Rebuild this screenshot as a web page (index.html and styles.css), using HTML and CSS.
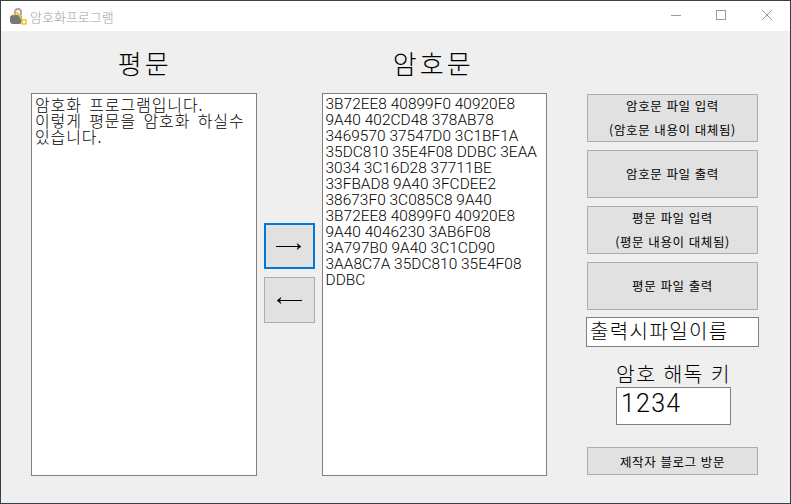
FILE: index.html
```html
<!DOCTYPE html>
<html lang="ko">
<head>
<meta charset="utf-8">
<title>암호화프로그램</title>
<link rel="stylesheet" href="styles.css">
</head>
<body>
<div class="window">
  <header class="titlebar">
    <svg class="app-icon" width="18" height="18" viewBox="0 0 18 18">
      <path d="M6 8V5a3 3 0 0 1 6 0v3" fill="none" stroke="#a8a8a8" stroke-width="2"/>
      <rect x="1" y="8" width="12" height="9" rx="3" fill="#777"/>
      <path d="M8 5l6 9" stroke="#f2c230" stroke-width="1.500" fill="none"/>
      <path d="M4 8l5-2" stroke="#f2c230" stroke-width="1.500" fill="none"/>
      <rect x="13" y="13" width="4" height="4" fill="none" stroke="#f2c230" stroke-width="1.500"/>
    </svg>
    <span class="app-title">암호화프로그램</span>
    <div class="controls">
      <svg class="ctl" width="46" height="30" viewBox="0 0 46 30"><path d="M19 14.500h10" stroke="#999" fill="none"/></svg>
      <svg class="ctl" width="46" height="30" viewBox="0 0 46 30"><rect x="18.500" y="9.500" width="9" height="9" stroke="#999" fill="none"/></svg>
      <svg class="ctl" width="46" height="30" viewBox="0 0 46 30"><path d="M18 9l10 10M28 9l-10 10" stroke="#999" fill="none"/></svg>
    </div>
  </header>
  <main class="client">
    <section class="col text-col">
      <h1 class="heading heading-plain">평문</h1>
      <div class="box hangul">암호화 프로그램입니다.<br>이렇게 평문을 암호화 하실수<br>있습니다.</div>
    </section>
    <div class="arrows">
      <button class="btn arrow focused" aria-label="암호화">
        <svg width="26" height="9" viewBox="0 0 26 9"><path d="M0 4.500h24" fill="none" stroke="#000"/><path d="M21 1.500l4 3-4 3 1.500-3z" fill="#000" stroke="#000" stroke-width="0.500"/></svg>
      </button>
      <button class="btn arrow" aria-label="복호화">
        <svg width="26" height="9" viewBox="0 0 26 9"><path d="M26 4.500H2" fill="none" stroke="#000"/><path d="M5 1.500l-4 3 4 3-1.500-3z" fill="#000" stroke="#000" stroke-width="0.500"/></svg>
      </button>
    </div>
    <section class="col text-col">
      <h1 class="heading heading-cipher">암호문</h1>
      <div class="box latin">3B72EE8 40899F0 40920E8<br>9A40 402CD48 378AB78<br>3469570 37547D0 3C1BF1A<br>35DC810 35E4F08 DDBC 3EAA<br>3034 3C16D28 37711BE<br>33FBAD8 9A40 3FCDEE2<br>38673F0 3C085C8 9A40<br>3B72EE8 40899F0 40920E8<br>9A40 4046230 3AB6F08<br>3A797B0 9A40 3C1CD90<br>3AA8C7A 35DC810 35E4F08<br>DDBC</div>
    </section>
    <aside class="side">
      <button class="btn act two"><span>암호문 파일 입력</span><span>(암호문 내용이 대체됨)</span></button>
      <button class="btn act">암호문 파일 출력</button>
      <button class="btn act two"><span>평문 파일 입력</span><span>(평문 내용이 대체됨)</span></button>
      <button class="btn act">평문 파일 출력</button>
      <div class="file-name">출력시파일이름</div>
      <div class="key-label">암호 해독 키</div>
      <div class="key-box">1234</div>
      <button class="btn blog">제작자 블로그 방문</button>
    </aside>
  </main>
</div>
</body>
</html>
```

FILE: styles.css
```css
* { box-sizing: border-box; }
html, body { margin: 0; height: 100%; }
body {
  background: #3a3f46;
  overflow: hidden;
  font-family: "Noto Sans CJK KR", "Liberation Sans", sans-serif;
  font-weight: 300;
  color: #000;
}
.window {
  width: 789px;
  height: 502px;
  margin: 1px 1px 0;
  background: #efefef;
  display: flex;
  flex-direction: column;
}
.titlebar {
  height: 30px;
  background: #fff;
  display: flex;
  align-items: center;
  padding-left: 8px;
  flex: none;
}
.app-icon { flex: none; }
.app-title {
  margin-left: 3px;
  font-size: 13px;
  color: #9c9c9c;
}
.controls { margin-left: auto; display: flex; }
.ctl { display: block; }
.client {
  flex: 1;
  display: flex;
  align-items: flex-start;
  padding: 12px 31px 0 30px;
}
.col { display: flex; flex-direction: column; }
.text-col { width: 226px; }
.heading {
  margin: 0;
  height: 50px;
  font-size: 26px;
  font-weight: 300;
  line-height: 40px;
  text-align: center;
  letter-spacing: 3px;
  color: #000;
}
.heading-plain { padding-left: 2px; }
.heading-cipher { padding-right: 2px; }
.box {
  height: 383px;
  background: #fff;
  border: 1px solid #808080;
  padding: 2px 3px;
  font-size: 16px;
  line-height: 16px;
}
.hangul {
  letter-spacing: 0.9px;
  word-spacing: 2px;
}
.latin {
  font-family: "Roboto", "Liberation Sans", sans-serif;
  font-size: 15.4px;
  font-weight: 300;
  letter-spacing: 0.05px;
}
.arrows {
  width: 65px;
  margin-top: 180px;
  padding-left: 7px;
  display: flex;
  flex-direction: column;
  gap: 8px;
  flex: none;
}
.btn {
  display: flex;
  flex-direction: column;
  align-items: center;
  justify-content: center;
  padding: 0;
  background: #e1e1e1;
  border: 1px solid #adadad;
  color: #000;
  font-family: "Noto Sans CJK KR", "Liberation Sans", sans-serif;
  font-weight: 400;
}
.arrow {
  width: 51px;
  height: 46px;
}
.arrow svg { display: block; }
.focused { border: 2px solid #0078d7; }
.side {
  margin-left: 39px;
  width: 173px;
  display: flex;
  flex-direction: column;
  align-items: center;
  padding-top: 51px;
}
.act {
  width: 171px;
  height: 48px;
  margin-bottom: 8px;
  padding-bottom: 2px;
  font-size: 12.5px;
  letter-spacing: 0.6px;
}
.two {
  gap: 8px;
  padding-bottom: 1px;
}
.two span { line-height: 16px; }
.file-name {
  width: 173px;
  height: 30px;
  margin-top: -1px;
  background: #fff;
  border: 1px solid #808080;
  padding-left: 3px;
  font-size: 20px;
  line-height: 26px;
  letter-spacing: 1.4px;
  white-space: nowrap;
}
.key-label {
  margin-top: 13px;
  margin-left: 2px;
  height: 27px;
  font-size: 20.5px;
  line-height: 27px;
  letter-spacing: 1.3px;
}
.key-box {
  width: 115px;
  height: 38px;
  margin-left: 2px;
  background: #fff;
  border: 1px solid #808080;
  padding-left: 4px;
  font-family: "Roboto", "Liberation Sans", sans-serif;
  font-size: 25px;
  line-height: 32px;
  letter-spacing: 1.2px;
}
.blog {
  width: 171px;
  height: 28px;
  margin-top: 22px;
  font-size: 12.5px;
  letter-spacing: 0.6px;
}
```
